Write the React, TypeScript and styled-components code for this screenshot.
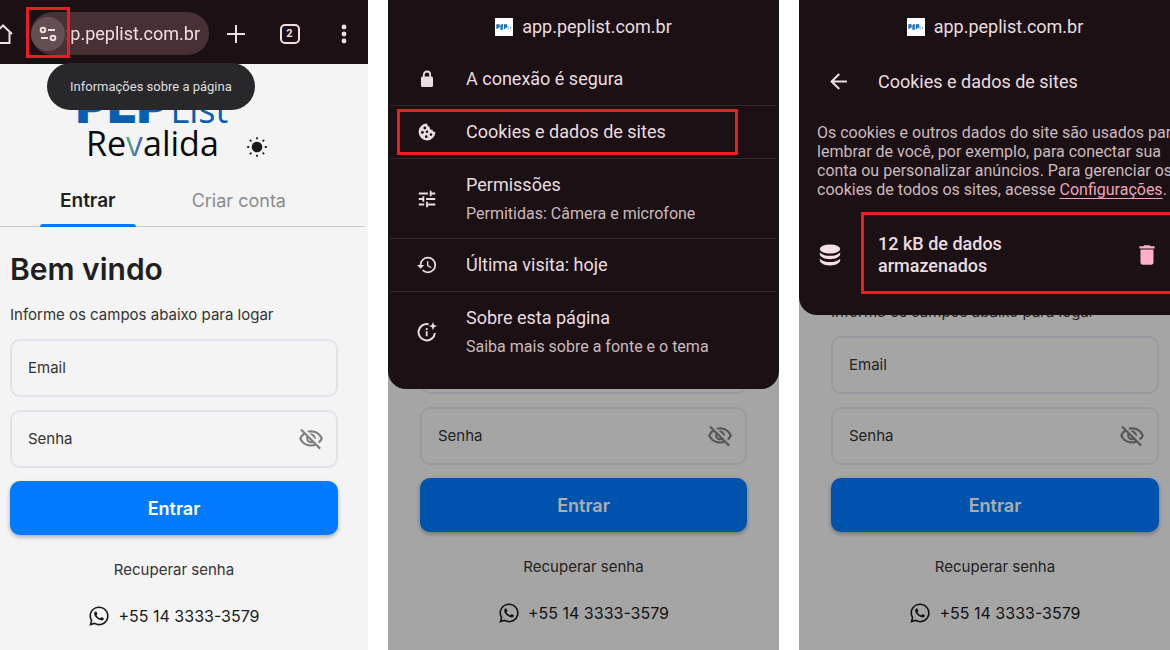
import React, { useId } from "react";
import styled, { createGlobalStyle, css } from "styled-components";
import {
  MdArrowBack,
  MdDelete,
  MdHistory,
  MdOutlineVisibilityOff,
  MdTune,
} from "react-icons/md";
import { FaWhatsapp } from "react-icons/fa";

const GlobalStyle = createGlobalStyle`
  *, *::before, *::after { box-sizing: border-box; }
  body {
    margin: 0;
    background: #ffffff;
    font-family: Inter, "Liberation Sans", sans-serif;
    color: #1f1f1f;
    overflow: hidden;
  }
  button, input { font: inherit; }
  h1, h2, p, ul { margin: 0; padding: 0; }
`;

const Board = styled.main`
  display: grid;
  grid-template-columns: 368fr 391fr 392fr;
  gap: 20px;
  width: calc(100% + 21px);
  min-height: 100vh;
`;

const Screen = styled.section`
  position: relative;
  min-width: 0;
  overflow: hidden;
  background: #f4f4f4;
`;

const Scrim = styled.div`
  position: absolute;
  inset: 0;
  background: rgba(0, 0, 0, 0.32);
`;

const Highlight = styled.span<{ $inset: string }>`
  position: absolute;
  inset: ${(p) => p.$inset};
  border: 3px solid #ed1c24;
  pointer-events: none;
`;

/* Browser toolbar */

const Toolbar = styled.header`
  display: flex;
  align-items: center;
  gap: 18px;
  height: 64px;
  padding: 3px 14px 0 0;
  background: #1b1013;
  color: #f0dfe2;
`;

const ToolActions = styled.div`
  flex: 1;
  display: flex;
  align-items: center;
  justify-content: space-between;
`;

const ToolButton = styled.button`
  display: grid;
  place-items: center;
  padding: 0;
  border: 0;
  background: none;
  color: inherit;
  cursor: pointer;
`;

const HomeButton = styled(ToolButton)`
  margin-left: -7px;
`;

const AddressBar = styled.div`
  position: relative;
  display: flex;
  align-items: center;
  width: 178px;
  height: 43px;
  padding: 0 9px 0 0;
  border-radius: 22px;
  background: #483136;
`;

const SiteInfoButton = styled(ToolButton)`
  flex: none;
  width: 34px;
  height: 34px;
  border-radius: 50%;
  background: #625054;
`;

const Address = styled.span`
  flex: 1;
  display: flex;
  justify-content: flex-end;
  min-width: 0;
  overflow: hidden;
  white-space: nowrap;
  font: 400 18px/24px Roboto, sans-serif;
  mask-image: linear-gradient(to right, transparent, #000 8px);
`;

const TabCount = styled.span`
  display: grid;
  place-items: center;
  width: 20px;
  height: 20px;
  border: 2px solid currentColor;
  border-radius: 5px;
  font: 700 11px/12px Roboto, sans-serif;
`;

const Tooltip = styled.div`
  position: absolute;
  z-index: 1;
  top: 63px;
  left: 47px;
  padding: 15px 23px 14px;
  border-radius: 24px;
  background: #28282b;
  color: #dedede;
  font: 400 13px/18px Roboto, sans-serif;
`;

/* Login page */

const Brand = styled.div`
  display: flex;
  align-items: flex-end;
  gap: 18px;
  height: 97px;
  padding-left: 76px;
`;

const Logo = styled.div`
  display: flex;
  flex-direction: column;
`;

const LogoTop = styled.div`
  display: flex;
  align-items: baseline;
  gap: 2px;
  color: #0560b0;
  font: 400 36px/30px "Open Sans", sans-serif;

  b {
    font: 900 48px/30px Inter, sans-serif;
  }
`;

const LogoBottom = styled.div`
  padding-left: 10px;
  color: #0a0a0a;
  font: 400 34px/36px "Open Sans", sans-serif;

  span {
    background: linear-gradient(100deg, #5fa57a 30%, #4470b8 70%);
    background-clip: text;
    color: transparent;
  }
`;

const ThemeButton = styled(ToolButton)`
  margin-bottom: 3px;
`;

const TabList = styled.div`
  display: flex;
  gap: 36px;
  margin-right: 3px;
  padding-left: 40px;
  border-bottom: 1px solid #c9cdd8;
`;

const Tab = styled.button<{ $active?: boolean }>`
  position: relative;
  height: 65px;
  padding: 14px 20px 0;
  border: 0;
  background: none;
  color: #8b8b8b;
  font-size: 18px;
  line-height: 26px;
  cursor: pointer;

  ${(p) =>
    p.$active &&
    css`
      color: #1f1f1f;
      font-size: 19px;
      font-weight: 600;

      &::after {
        content: "";
        position: absolute;
        inset: auto 0 -1px;
        height: 3px;
        border-radius: 3px 3px 0 0;
        background: #007bff;
      }
    `}
`;

const Form = styled.form<{ $pad: string }>`
  display: flex;
  flex-direction: column;
  padding: ${(p) => p.$pad};
`;

const Title = styled.h1`
  margin-bottom: 16px;
  font-size: 30px;
  font-weight: 600;
  line-height: 40px;
`;

const Intro = styled.p`
  margin-bottom: 14px;
  color: #333333;
  font-size: 15px;
  line-height: 20px;
`;

const Field = styled.div`
  display: flex;
  align-items: center;
  gap: 8px;
  height: 58px;
  margin-bottom: 13px;
  padding: 0 12px 0 16px;
  border: 2px solid #e0e4ea;
  border-radius: 10px;
  color: #333333;
  font-size: 15px;
  line-height: 20px;

  input {
    flex: 1;
    min-width: 0;
    padding: 0;
    border: 0;
    outline: 0;
    background: none;
  }
`;

const EyeButton = styled(ToolButton)`
  color: #808080;
`;

const Submit = styled.button`
  height: 54px;
  margin-bottom: 24px;
  border: 0;
  border-radius: 10px;
  background: #007bff;
  box-shadow: 0 2px 4px rgba(0, 0, 0, 0.3);
  color: #ffffff;
  font-size: 18px;
  font-weight: 600;
  cursor: pointer;
`;

const FormLink = styled.a<{ $strong?: boolean }>`
  display: flex;
  align-items: center;
  align-self: center;
  gap: 8px;
  margin-bottom: 24px;
  color: ${(p) => (p.$strong ? "#1a1a1a" : "#333333")};
  font-size: ${(p) => (p.$strong ? 16 : 15)}px;
  line-height: 22px;
  text-decoration: none;
`;

/* Page information sheet */

const Sheet = styled.div<{ $bottom: number }>`
  position: absolute;
  inset: 0 0 auto;
  padding-bottom: ${(p) => p.$bottom}px;
  border-radius: 0 0 18px 18px;
  background: #1b1013;
  color: #eadde0;
  font: 400 18px/24px Roboto, sans-serif;
`;

const SiteName = styled.h2`
  display: flex;
  align-items: center;
  justify-content: center;
  gap: 9px;
  height: 53px;
  font: inherit;
`;

const Favicon = styled.span`
  display: grid;
  place-items: center;
  width: 18px;
  height: 18px;
  background: #ffffff;
`;

const SheetList = styled.ul`
  list-style: none;
  margin: 0 2px;
`;

const SheetItem = styled.li`
  position: relative;

  & + & {
    border-top: 1px solid #33292c;
  }
`;

const SheetButton = styled.button<{ $tall?: boolean }>`
  display: grid;
  grid-template-columns: 22px 1fr;
  align-items: center;
  gap: 28px;
  width: 100%;
  height: ${(p) => (p.$tall ? 79 : 52)}px;
  padding: 0 26px;
  border: 0;
  background: none;
  color: inherit;
  text-align: left;
  cursor: pointer;

  svg {
    justify-self: center;
  }
`;

const ItemText = styled.span`
  display: grid;
  gap: 6px;

  small {
    color: #cbbabe;
    font-size: 16px;
    line-height: 22px;
  }
`;

const SubHeader = styled.div`
  display: flex;
  align-items: center;
  gap: 27px;
  height: 57px;
  padding: 0 27px;

  h2 {
    font: inherit;
  }
`;

const Explanation = styled.p`
  padding: 13px 0 0 18px;
  color: #cbbabe;
  font-size: 16px;
  line-height: 19px;
  white-space: nowrap;

  a {
    color: #f2a3bb;
    text-underline-offset: 3px;
  }
`;

const StorageRow = styled.div`
  display: grid;
  grid-template-columns: 62px 1fr;
  align-items: center;
  margin-top: 13px;
`;

const StorageIcon = styled.span`
  display: grid;
  place-items: center;
  padding-top: 4px;
`;

const StorageBox = styled.div`
  display: flex;
  align-items: center;
  justify-content: space-between;
  height: 82px;
  padding: 4px 28px 0 14px;
  border: 3px solid #ed1c24;
  font-weight: 500;
  line-height: 22px;

  button {
    color: #ffafc8;
  }
`;

const HomeIcon = () => (
  <svg width="20" height="22" viewBox="0 0 20 22" fill="none" stroke="currentColor" strokeWidth="2">
    <path d="M1 11 10 2.500l9 8.500M3.500 9v11h13V9" />
  </svg>
);

const SiteInfoIcon = () => (
  <svg width="18" height="16" viewBox="0 0 18 16" fill="none" stroke="currentColor" strokeWidth="2">
    <circle cx="4" cy="4" r="2.300" />
    <path d="M9 4h7M2 12h7" />
    <circle cx="14" cy="12" r="2.300" />
  </svg>
);

const PlusIcon = () => (
  <svg width="18" height="18" viewBox="0 0 18 18" stroke="currentColor" strokeWidth="2">
    <path d="M9 0v18M0 9h18" />
  </svg>
);

const DotsIcon = () => (
  <svg width="20" height="20" viewBox="0 0 20 20" fill="currentColor">
    <circle cx="10" cy="3" r="2.400" />
    <circle cx="10" cy="10" r="2.400" />
    <circle cx="10" cy="17" r="2.400" />
  </svg>
);

const SunIcon = () => (
  <svg width="22" height="22" viewBox="0 0 22 22" fill="#1a1a1a" stroke="#1a1a1a">
    <circle cx="11" cy="11" r="5.300" stroke="none" />
    <path
      strokeWidth="1.800"
      strokeLinecap="round"
      d="M11 1.900v.6M11 19.500v.6M1.900 11h.6M19.500 11h.6M4.400 4.400l.4.400M17.200 17.200l.4.400M4.400 17.600l.4-.4M17.200 4.800l.4-.4"
    />
  </svg>
);

const LockIcon = () => (
  <svg width="14" height="18" viewBox="0 0 14 18" fill="none" stroke="currentColor" strokeWidth="1.800">
    <path d="M3.800 7V4.700a3.200 3.200 0 0 1 6.400 0V7" />
    <rect x="1" y="6.500" width="12" height="10.500" rx="1.500" fill="currentColor" stroke="none" />
  </svg>
);

const CookieIcon = () => (
  <svg width="18" height="18" viewBox="0 0 18 18" fill="currentColor">
    <path
      fillRule="evenodd"
      d="M9 .6a8.400 8.400 0 1 0 8.400 8.200c-1.400.4-2.900-.5-3-2-1.900.2-3-1.300-2.700-2.900C10 3.700 9.200 2.200 9 .6zM6.800 3.600a1.400 1.400 0 1 1 0 2.800 1.400 1.400 0 0 1 0-2.800zM4.400 8a1.400 1.400 0 1 1 0 2.800 1.400 1.400 0 0 1 0-2.800zM9 7.400a1.300 1.300 0 1 1 0 2.600 1.300 1.300 0 0 1 0-2.600zM8.300 12.300a1.400 1.400 0 1 1 0 2.800 1.400 1.400 0 0 1 0-2.800zM13 10.300a1.300 1.300 0 1 1 0 2.600 1.300 1.300 0 0 1 0-2.600z"
    />
  </svg>
);

const DatabaseIcon = () => (
  <svg width="22" height="22" viewBox="0 0 22 22" fill="#f3dfe4">
    <ellipse cx="11" cy="5" rx="10.200" ry="4.600" />
    <path d="M.8 8.500c2 2.600 6 3.300 10.200 3.300s8.200-.7 10.200-3.300c.8 4-4 6.700-10.200 6.700S0 12.500.8 8.500z" />
    <path d="M.8 14.700c2 2.600 6 3.300 10.200 3.300s8.200-.7 10.200-3.300c.8 4-4 6.700-10.200 6.700S0 18.700.8 14.700z" />
  </svg>
);

const InfoSparkIcon = () => (
  <svg width="20" height="20" viewBox="0 0 20 20" fill="none" stroke="currentColor" strokeWidth="2">
    <path d="M11.500 2.200A8.200 8.200 0 1 0 17.900 11" />
    <path d="M9.700 9.300v5M9.700 6v2" strokeWidth="1.800" />
    <path
      d="M16 0l1.100 3 2.900 1.100-2.900 1.100L16 8.200l-1.100-3L12 4.100l2.900-1.100z"
      fill="currentColor"
      stroke="none"
    />
  </svg>
);

const FaviconMark = () => (
  <svg width="16" height="6" viewBox="0 0 16 6" fill="none">
    <path
      d="M1 5V1h2v2H1M5 1v4h2M5 1h2M5 3h2M8.500 5V1h2v2h-2"
      stroke="#0b68b5"
      strokeWidth="1.300"
    />
    <path d="M12 2v3h1M14.500 3v2" stroke="#7fb1dc" />
  </svg>
);

type LoginFormProps = { pad: string; heading?: boolean; intro?: boolean };

function LoginForm({ pad, heading, intro }: LoginFormProps) {
  const id = useId();
  return (
    <Form $pad={pad} onSubmit={(e) => e.preventDefault()}>
      {heading && <Title>Bem vindo</Title>}
      {intro && <Intro>Informe os campos abaixo para logar</Intro>}
      <Field>
        <label htmlFor={`${id}-email`}>Email</label>
        <input id={`${id}-email`} type="email" />
      </Field>
      <Field>
        <label htmlFor={`${id}-senha`}>Senha</label>
        <input id={`${id}-senha`} type="password" />
        <EyeButton type="button">
          <MdOutlineVisibilityOff size={26} />
        </EyeButton>
      </Field>
      <Submit type="submit">Entrar</Submit>
      <FormLink href="#recuperar">Recuperar senha</FormLink>
      <FormLink href="#whatsapp" $strong>
        <FaWhatsapp size={22} />
        +55 14 3333-3579
      </FormLink>
    </Form>
  );
}

const SheetTitle = () => (
  <SiteName>
    <Favicon>
      <FaviconMark />
    </Favicon>
    app.peplist.com.br
  </SiteName>
);

const entries = [
  { icon: <LockIcon />, title: "A conexão é segura" },
  { icon: <CookieIcon />, title: "Cookies e dados de sites", marked: true },
  { icon: <MdTune size={22} />, title: "Permissões", detail: "Permitidas: Câmera e microfone" },
  { icon: <MdHistory size={22} />, title: "Última visita: hoje" },
  { icon: <InfoSparkIcon />, title: "Sobre esta página", detail: "Saiba mais sobre a fonte e o tema" },
];

export default function App() {
  return (
    <>
      <GlobalStyle />
      <Board>
        <Screen>
          <Toolbar>
            <HomeButton>
              <HomeIcon />
            </HomeButton>
            <AddressBar>
              <SiteInfoButton>
                <SiteInfoIcon />
              </SiteInfoButton>
              <Address>app.peplist.com.br</Address>
              <Highlight $inset="-5px 139px -3px -5px" />
            </AddressBar>
            <ToolActions>
              <ToolButton>
                <PlusIcon />
              </ToolButton>
              <ToolButton>
                <TabCount>2</TabCount>
              </ToolButton>
              <ToolButton>
                <DotsIcon />
              </ToolButton>
            </ToolActions>
          </Toolbar>
          <Tooltip role="tooltip">Informações sobre a página</Tooltip>
          <Brand>
            <Logo>
              <LogoTop>
                <b>PEP</b>List
              </LogoTop>
              <LogoBottom>
                Re<span>v</span>alida
              </LogoBottom>
            </Logo>
            <ThemeButton>
              <SunIcon />
            </ThemeButton>
          </Brand>
          <TabList role="tablist">
            <Tab role="tab" aria-selected $active>
              Entrar
            </Tab>
            <Tab role="tab">Criar conta</Tab>
          </TabList>
          <LoginForm pad="22px 30px 0 10px" heading intro />
        </Screen>

        <Screen>
          <LoginForm pad="336px 32px 0" />
          <Scrim />
          <Sheet $bottom={18}>
            <SheetTitle />
            <SheetList>
              {entries.map((entry) => (
                <SheetItem key={entry.title}>
                  <SheetButton $tall={!!entry.detail}>
                    {entry.icon}
                    <ItemText>
                      {entry.title}
                      {entry.detail && <small>{entry.detail}</small>}
                    </ItemText>
                  </SheetButton>
                  {entry.marked && <Highlight $inset="3px 39px 3px 7px" />}
                </SheetItem>
              ))}
            </SheetList>
          </Sheet>
        </Screen>

        <Screen>
          <LoginForm pad="302px 32px 0" intro />
          <Scrim />
          <Sheet $bottom={21}>
            <SheetTitle />
            <SubHeader>
              <ToolButton>
                <MdArrowBack size={25} />
              </ToolButton>
              <h2>Cookies e dados de sites</h2>
            </SubHeader>
            <Explanation>
              Os cookies e outros dados do site são usados para
              <br />
              lembrar de você, por exemplo, para conectar sua
              <br />
              conta ou personalizar anúncios. Para gerenciar os
              <br />
              cookies de todos os sites, acesse <a href="#configuracoes">Configurações</a>.
            </Explanation>
            <StorageRow>
              <StorageIcon>
                <DatabaseIcon />
              </StorageIcon>
              <StorageBox>
                <span>
                  12 kB de dados
                  <br />
                  armazenados
                </span>
                <ToolButton>
                  <MdDelete size={26} />
                </ToolButton>
              </StorageBox>
            </StorageRow>
          </Sheet>
        </Screen>
      </Board>
    </>
  );
}
